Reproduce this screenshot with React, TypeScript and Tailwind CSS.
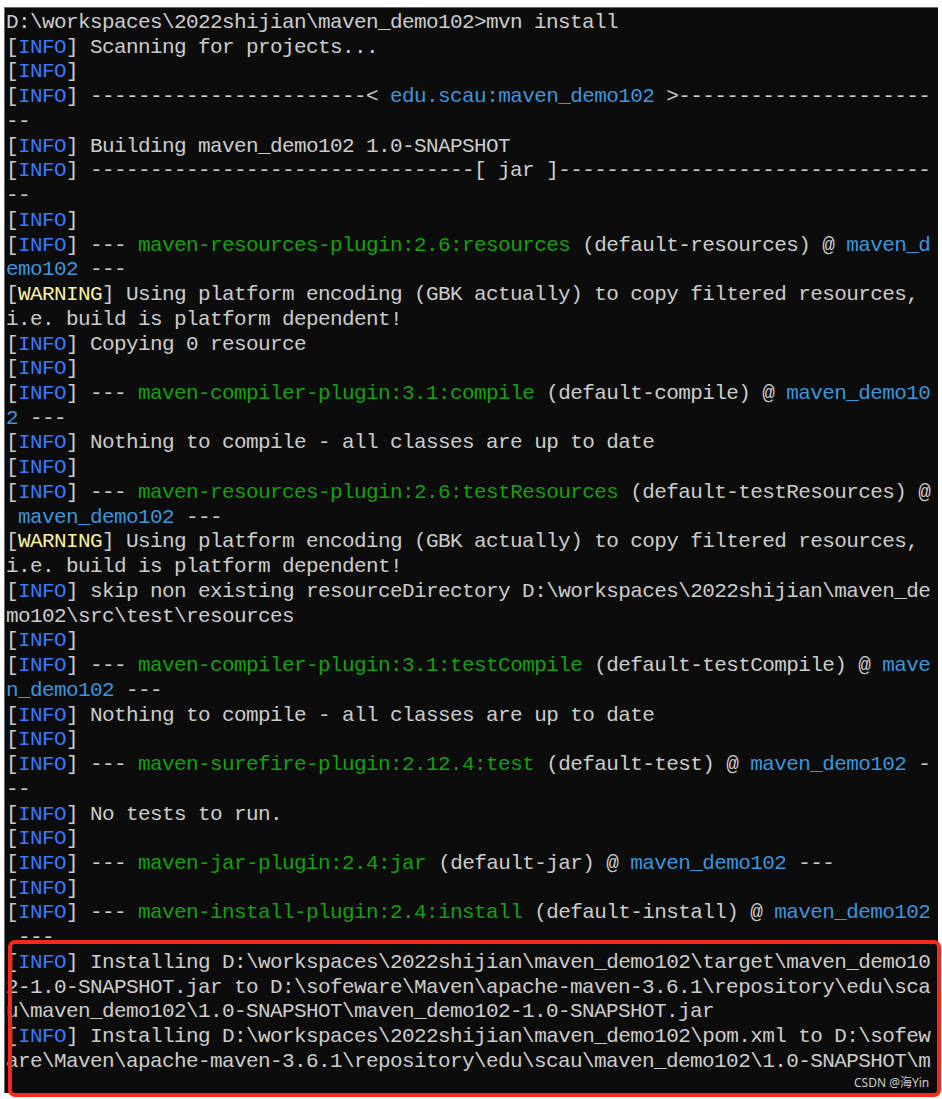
import React from "react";

const C = {
  d: "text-[#cccccc]",
  b: "text-[#3b78ff]",
  g: "text-[#13a10e]",
  c: "text-[#3a96dd]",
  y: "text-[#f9f1a5]",
} as const;

type K = keyof typeof C;
type Seg = [string, K];

const INFO: Seg[] = [
  ["[", "d"],
  ["INFO", "b"],
  ["]", "d"],
];
const WARN: Seg[] = [
  ["[", "d"],
  ["WARNING", "y"],
  ["]", "d"],
];

const dash = (n: number) => "-".repeat(n);

const lines: Seg[][] = [
  [["D:\\workspaces\\2022shijian\\maven_demo102>mvn install", "d"]],
  [...INFO, [" Scanning for projects...", "d"]],
  [...INFO],
  [...INFO, [" " + dash(23) + "< ", "d"], ["edu.scau:maven_demo102", "c"], [" >" + dash(21), "d"]],
  [["--", "d"]],
  [...INFO, [" Building maven_demo102 1.0-SNAPSHOT", "d"]],
  [...INFO, [" " + dash(32) + "[ jar ]" + dash(31), "d"]],
  [["--", "d"]],
  [...INFO],
  [...INFO, [" --- ", "d"], ["maven-resources-plugin:2.6:resources", "g"], [" (default-resources) @ ", "d"], ["maven_d", "c"]],
  [["emo102", "c"], [" ---", "d"]],
  [...WARN, [" Using platform encoding (GBK actually) to copy filtered resources,", "d"]],
  [["i.e. build is platform dependent!", "d"]],
  [...INFO, [" Copying 0 resource", "d"]],
  [...INFO],
  [...INFO, [" --- ", "d"], ["maven-compiler-plugin:3.1:compile", "g"], [" (default-compile) @ ", "d"], ["maven_demo10", "c"]],
  [["2", "c"], [" ---", "d"]],
  [...INFO, [" Nothing to compile - all classes are up to date", "d"]],
  [...INFO],
  [...INFO, [" --- ", "d"], ["maven-resources-plugin:2.6:testResources", "g"], [" (default-testResources) @", "d"]],
  [[" ", "d"], ["maven_demo102", "c"], [" ---", "d"]],
  [...WARN, [" Using platform encoding (GBK actually) to copy filtered resources,", "d"]],
  [["i.e. build is platform dependent!", "d"]],
  [...INFO, [" skip non existing resourceDirectory D:\\workspaces\\2022shijian\\maven_de", "d"]],
  [["mo102\\src\\test\\resources", "d"]],
  [...INFO],
  [...INFO, [" --- ", "d"], ["maven-compiler-plugin:3.1:testCompile", "g"], [" (default-testCompile) @ ", "d"], ["mave", "c"]],
  [["n_demo102", "c"], [" ---", "d"]],
  [...INFO, [" Nothing to compile - all classes are up to date", "d"]],
  [...INFO],
  [...INFO, [" --- ", "d"], ["maven-surefire-plugin:2.12.4:test", "g"], [" (default-test) @ ", "d"], ["maven_demo102", "c"], [" -", "d"]],
  [["--", "d"]],
  [...INFO, [" No tests to run.", "d"]],
  [...INFO],
  [...INFO, [" --- ", "d"], ["maven-jar-plugin:2.4:jar", "g"], [" (default-jar) @ ", "d"], ["maven_demo102", "c"], [" ---", "d"]],
  [...INFO],
  [...INFO, [" --- ", "d"], ["maven-install-plugin:2.4:install", "g"], [" (default-install) @ ", "d"], ["maven_demo102", "c"]],
  [[" ---", "d"]],
  [...INFO, [" Installing D:\\workspaces\\2022shijian\\maven_demo102\\target\\maven_demo10", "d"]],
  [["2-1.0-SNAPSHOT.jar to D:\\sofeware\\Maven\\apache-maven-3.6.1\\repository\\edu\\sca", "d"]],
  [["u\\maven_demo102\\1.0-SNAPSHOT\\maven_demo102-1.0-SNAPSHOT.jar", "d"]],
  [...INFO, [" Installing D:\\workspaces\\2022shijian\\maven_demo102\\pom.xml to D:\\sofew", "d"]],
  [["are\\Maven\\apache-maven-3.6.1\\repository\\edu\\scau\\maven_demo102\\1.0-SNAPSHOT\\m", "d"]],
];

export default function App() {
  return (
    <div className="relative w-[942px] h-[1099px] overflow-hidden bg-white">
      <div className="ml-[4px] mt-[7px] w-[934px] h-[1086px] bg-[#0c0c0c] border-l border-t border-[#6b6b6b] pl-[1px] pt-[3px] flex flex-col font-['Liberation_Mono',monospace] text-[21px] tracking-[-0.6px]">
        {lines.map((segs, i) => (
          <div key={i} className="h-[24.74px] leading-[24.74px] whitespace-pre">
            {segs.map(([t, k], j) => (
              <span key={j} className={C[k]}>
                {t}
              </span>
            ))}
          </div>
        ))}
      </div>
      <div className="absolute left-[8px] top-[940px] w-[933px] h-[157px] border-[4px] border-[#f52a1d] rounded-[7px]" />
      <div className="absolute left-[854px] top-[1075px] text-[12px] leading-[16px] text-[#cfcfcf] font-['Noto_Sans','Noto_Sans_CJK_SC',sans-serif]">
        CSDN @海Yin
      </div>
    </div>
  );
}
